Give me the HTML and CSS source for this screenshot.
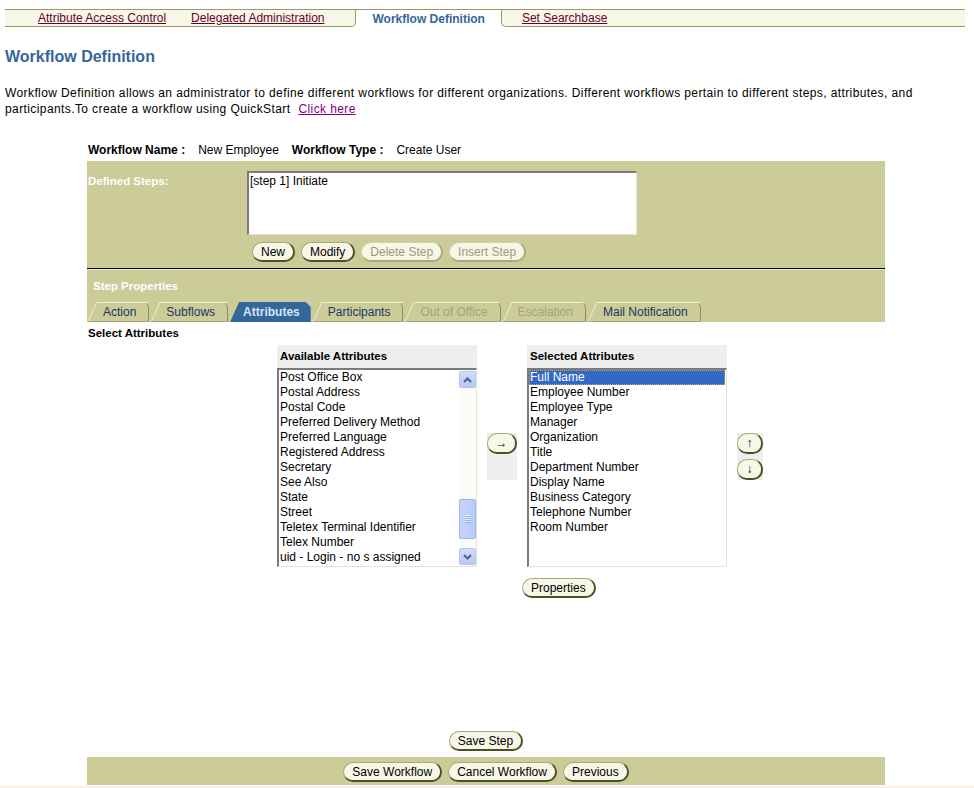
FILE: index.html
```html
<!DOCTYPE html>
<html lang="en">
<head>
    <meta charset="UTF-8">
    <title>Workflow Definition</title>
    <link rel="stylesheet" href="styles.css">
</head>
<body>
    <div class="tabbar">
        <div class="tabbar-side tabbar-left">
            <a href="#">Attribute Access Control</a>
            <a href="#">Delegated Administration</a>
        </div>
        <div class="tabbar-active">Workflow Definition</div>
        <div class="tabbar-side tabbar-right">
            <a href="#">Set Searchbase</a>
        </div>
    </div>

    <h1 class="page-title">Workflow Definition</h1>

    <p class="intro">
        <span>Workflow Definition allows an administrator to define different workflows for different organizations. Different workflows pertain to different steps, attributes, and</span><br>
        <span>participants.To create a workflow using QuickStart</span><a class="visited" href="#">Click here</a>
    </p>

    <div class="wf">
        <div class="wf-info">
            <span class="info-label">Workflow Name :</span>
            <span class="info-value">New Employee</span>
            <span class="info-label">Workflow Type :</span>
            <span class="info-value">Create User</span>
        </div>

        <div class="steps-panel">
            <div class="steps-label">Defined Steps:</div>
            <div class="steps-body">
                <div class="textbox">[step 1] Initiate</div>
                <div class="btn-row">
                    <button class="btn">New</button>
                    <button class="btn">Modify</button>
                    <button class="btn" disabled>Delete Step</button>
                    <button class="btn" disabled>Insert Step</button>
                </div>
            </div>
        </div>

        <div class="props-panel">
            <div class="props-title">Step Properties</div>
            <div class="ptabs">
                <div class="ptab">Action</div>
                <div class="ptab">Subflows</div>
                <div class="ptab ptab-active">Attributes</div>
                <div class="ptab">Participants</div>
                <div class="ptab ptab-off">Out of Office</div>
                <div class="ptab ptab-off">Escalation</div>
                <div class="ptab">Mail Notification</div>
            </div>
        </div>

        <div class="select-title">Select Attributes</div>

        <div class="shuttle">
            <div class="shuttle-col">
                <div class="col-head">Available Attributes</div>
                <div class="listbox">
                    <div class="options">
                        <div>Post Office Box</div>
                        <div>Postal Address</div>
                        <div>Postal Code</div>
                        <div>Preferred Delivery Method</div>
                        <div>Preferred Language</div>
                        <div>Registered Address</div>
                        <div>Secretary</div>
                        <div>See Also</div>
                        <div>State</div>
                        <div>Street</div>
                        <div>Teletex Terminal Identifier</div>
                        <div>Telex Number</div>
                        <div>uid - Login - no s assigned</div>
                    </div>
                    <div class="scrollbar">
                        <div class="sb-btn">
                            <svg width="9" height="6" viewBox="0 0 9 6"><polyline points="1,5 4.5,1.5 8,5" fill="none" stroke="#4d6185" stroke-width="2"/></svg>
                        </div>
                        <div class="sb-track">
                            <div class="sb-thumb"></div>
                        </div>
                        <div class="sb-btn">
                            <svg width="9" height="6" viewBox="0 0 9 6"><polyline points="1,1 4.5,4.5 8,1" fill="none" stroke="#4d6185" stroke-width="2"/></svg>
                        </div>
                    </div>
                </div>
            </div>

            <div class="move-box">
                <button class="btn btn-arrow">&rarr;</button>
            </div>

            <div class="shuttle-col">
                <div class="col-head">Selected Attributes</div>
                <div class="listbox">
                    <div class="options">
                        <div class="opt-selected">Full Name</div>
                        <div>Employee Number</div>
                        <div>Employee Type</div>
                        <div>Manager</div>
                        <div>Organization</div>
                        <div>Title</div>
                        <div>Department Number</div>
                        <div>Display Name</div>
                        <div>Business Category</div>
                        <div>Telephone Number</div>
                        <div>Room Number</div>
                    </div>
                </div>
            </div>

            <div class="order-box">
                <button class="btn btn-order">&uarr;</button>
                <button class="btn btn-order">&darr;</button>
            </div>
        </div>

        <div class="props-row">
            <button class="btn">Properties</button>
        </div>

        <div class="save-row">
            <button class="btn">Save Step</button>
        </div>

        <div class="footer-bar">
            <button class="btn">Save Workflow</button>
            <button class="btn">Cancel Workflow</button>
            <button class="btn">Previous</button>
        </div>
    </div>
    <div class="page-end"></div>
</body>
</html>
```

FILE: styles.css
```css
body {
    margin: 0;
    padding: 9px 9px 0 5px;
    font-family: "Liberation Sans", Arial, sans-serif;
    font-size: 12px;
    color: #000;
    background: #fff;
}

a {
    color: #660033;
}

a.visited {
    margin-left: 8px;
    color: #800080;
}

/* top level tabs */
.tabbar {
    display: flex;
    height: 18px;
}

.tabbar-side {
    display: flex;
    align-items: center;
    background-color: #f7f7e7;
    border-top: 1px solid #999966;
    border-bottom: 1px solid #999966;
}

.tabbar-left {
    gap: 25px;
    padding: 0 31px 0 33px;
    border-right: 1px solid #999966;
    border-bottom-right-radius: 5px;
}

.tabbar-right {
    flex: 1;
    padding-left: 20px;
    border-left: 1px solid #999966;
    border-bottom-left-radius: 5px;
}

.tabbar-active {
    display: flex;
    align-items: center;
    padding: 0 16px;
    border-top: 1px solid #999966;
    color: #336699;
    font-weight: bold;
}

.page-title {
    margin: 20px 0 0;
    font-size: 16px;
    line-height: 20px;
    color: #336699;
}

.intro {
    margin: 18px 0 0;
    line-height: 16px;
    letter-spacing: 0.4px;
    white-space: nowrap;
}

/* workflow block */
.wf {
    width: 798px;
    margin: 22px 0 0 82px;
}

.wf-info {
    display: flex;
    align-items: center;
    height: 22px;
    padding-left: 1px;
}

.info-label {
    font-weight: bold;
    margin-right: 13px;
}

.info-value {
    margin-right: 13px;
}

.steps-panel {
    display: flex;
    padding: 10px 0 6px;
    background-color: #cccc99;
    border-bottom: 1px solid #000;
}

.steps-label {
    width: 159px;
    padding: 4px 0 0 1px;
    color: #fff;
    font-weight: bold;
    font-size: 11.5px;
}

.textbox {
    width: 386px;
    height: 61px;
    padding: 0 0 0 1px;
    background: #fff;
    border-style: solid;
    border-width: 2px 1px 1px 2px;
    border-color: #7b7b7b #e4e4dc #e4e4dc #7b7b7b;
    line-height: 16px;
}

.btn-row {
    display: flex;
    gap: 6px;
    margin: 7px 0 0 5px;
}

.btn {
    box-sizing: border-box;
    display: inline-flex;
    align-items: center;
    justify-content: center;
    height: 20px;
    padding: 0 8px;
    background: #f7f7e7;
    border-style: solid;
    border-width: 1px 2px 2px 1px;
    border-color: #a8a878 #4f4f26 #4f4f26 #a8a878;
    border-radius: 10px;
    font-family: "Liberation Sans", Arial, sans-serif;
    font-size: 12px;
    color: #000;
    cursor: pointer;
}

.btn:disabled {
    border-color: #d2d2b2 #a9a980 #a9a980 #d2d2b2;
    color: #9c9c7c;
}

.props-panel {
    padding: 8px 0 0;
    background-color: #cccc99;
    border-top: 1px solid #ebebd3;
}

.props-title {
    padding-left: 6px;
    line-height: 16px;
    color: #fff;
    font-weight: bold;
    font-size: 11.5px;
}

.ptabs {
    display: flex;
    gap: 2px;
    margin: 8px 0 0 1px;
}

.ptab {
    position: relative;
    display: flex;
    align-items: center;
    height: 20px;
    box-sizing: border-box;
    padding: 0 12px 0 15px;
    color: #223366;
    border-right: 1px solid #8c8c5c;
    border-bottom: 1px solid #a6a676;
    border-top-right-radius: 6px;
}

.ptab::before {
    content: "";
    position: absolute;
    left: 0;
    top: 0;
    bottom: 0;
    right: 8px;
    border-left: 1px solid #ededd5;
    border-top: 1px solid #ededd5;
    transform: skewX(-24deg);
    transform-origin: bottom left;
}

.ptab-off {
    color: #a3a383;
}

.ptab-active {
    padding: 0 11px 0 13px;
    background-color: #336699;
    color: #d5e3f7;
    font-weight: bold;
    border: none;
    clip-path: polygon(9px 0, calc(100% - 5px) 0, 100% 5px, 100% 100%, 0 100%);
}

.ptab-active::before {
    display: none;
}

.select-title {
    margin-top: 3px;
    padding-left: 1px;
    line-height: 16px;
    font-weight: bold;
    font-size: 11.5px;
}

/* attribute shuttle */
.shuttle {
    display: flex;
    align-items: center;
    gap: 10px;
    margin: 4px 0 0 190px;
}

.shuttle-col {
    width: 200px;
}

.col-head {
    height: 23px;
    padding-left: 3px;
    line-height: 22px;
    background-color: #eeeeee;
    font-weight: bold;
    font-size: 11.5px;
}

.listbox {
    display: flex;
    box-sizing: border-box;
    height: 199px;
    background: #fff;
    border-style: solid;
    border-width: 2px 1px 1px 2px;
    border-color: #7b7b7b #e4e4dc #e4e4dc #7b7b7b;
}

.options {
    flex: 1;
    line-height: 15px;
    white-space: nowrap;
    overflow: hidden;
}

.options div {
    padding-left: 1px;
}

.options .opt-selected {
    margin-right: 1px;
    background-color: #316ac5;
    color: #fff;
    outline: 1px dotted #d9a441;
    outline-offset: -1px;
}

.scrollbar {
    display: flex;
    flex-direction: column;
    width: 17px;
    background: #fbfbf8;
}

.sb-btn {
    display: flex;
    align-items: center;
    justify-content: center;
    height: 15px;
    margin: 1px 0;
    background: linear-gradient(#cfdcfd, #b6c9f5);
    border: 1px solid #b4c6ee;
    border-radius: 2px;
}

.sb-track {
    flex: 1;
    padding-top: 110px;
}

.sb-thumb {
    position: relative;
    height: 38px;
    background: linear-gradient(to right, #c6d5fc, #b8cbf6);
    border: 1px solid #9fb6ea;
    border-radius: 2px;
}

.sb-thumb::after {
    content: "";
    position: absolute;
    left: 5px;
    top: 15px;
    width: 6px;
    height: 8px;
    background: repeating-linear-gradient(#eef3fe 0 1px, #8eaaf0 1px 2px);
}

.move-box {
    width: 30px;
    height: 47px;
    background-color: #eeeeee;
}

.btn-arrow {
    width: 30px;
    height: 21px;
    padding: 0;
}

.order-box {
    display: flex;
    flex-direction: column;
    gap: 5px;
    width: 26px;
    height: 47px;
    background-color: #eeeeee;
}

.btn-order {
    width: 26px;
    height: 21px;
    padding: 0;
}

.props-row {
    margin: 11px 0 0 435px;
}

.save-row {
    display: flex;
    justify-content: center;
    margin-top: 133px;
}

.footer-bar {
    display: flex;
    justify-content: center;
    gap: 6px;
    margin-top: 6px;
    padding: 5px 0 3px;
    background-color: #cccc99;
}

.page-end {
    height: 3px;
    margin: 1px -9px 0 -5px;
    background-color: #f8f0e8;
}
```
